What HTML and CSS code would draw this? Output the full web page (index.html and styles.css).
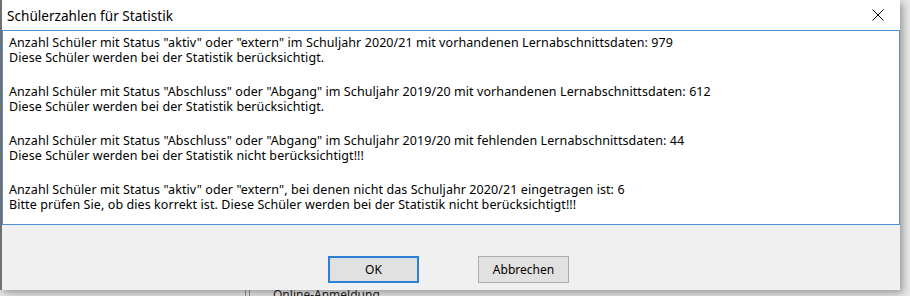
FILE: index.html
```html
<!DOCTYPE html>
<html lang="de">
<head>
    <meta charset="UTF-8">
    <title>Schülerzahlen für Statistik</title>
    <link rel="stylesheet" href="styles.css">
</head>
<body>

    <div class="dialog">
        <div class="titlebar">
            <span class="title">Schülerzahlen für Statistik</span>
            <button class="close-btn" title="Schließen">
                <svg width="12" height="12" viewBox="0 0 12 12">
                    <path d="M0.5 0.5 L11.5 11.5 M11.5 0.5 L0.5 11.5" stroke="#000" stroke-width="1" fill="none"/>
                </svg>
            </button>
        </div>

        <div class="memo">
            <p>Anzahl Schüler mit Status "aktiv" oder "extern" im Schuljahr 2020/21 mit vorhandenen Lernabschnittsdaten: 979<br>
            Diese Schüler werden bei der Statistik berücksichtigt.</p>
            <p>Anzahl Schüler mit Status "Abschluss" oder "Abgang" im Schuljahr 2019/20 mit vorhandenen Lernabschnittsdaten: 612<br>
            Diese Schüler werden bei der Statistik berücksichtigt.</p>
            <p>Anzahl Schüler mit Status "Abschluss" oder "Abgang" im Schuljahr 2019/20 mit fehlenden Lernabschnittsdaten: 44<br>
            Diese Schüler werden bei der Statistik nicht berücksichtigt!!!</p>
            <p>Anzahl Schüler mit Status "aktiv" oder "extern", bei denen nicht das Schuljahr 2020/21 eingetragen ist: 6<br>
            Bitte prüfen Sie, ob dies korrekt ist. Diese Schüler werden bei der Statistik nicht berücksichtigt!!!</p>
        </div>

        <div class="buttons">
            <button class="btn btn-default">OK</button>
            <button class="btn">Abbrechen</button>
        </div>
    </div>

    <div class="app">
        <span class="splitter"></span>
        <span class="app-item">Online-Anmeldung</span>
    </div>

</body>
</html>
```

FILE: styles.css
```css
* { margin: 0; padding: 0; box-sizing: border-box; }
body {
    width: 910px; height: 296px; overflow: hidden;
    background: #e9e9e9; font-family: "Noto Sans", "DejaVu Sans", sans-serif; color: #000;
}
.dialog {
    width: 900px; height: 290px; background: #f0f0f0;
    border-left: 2px solid #707070;
    box-shadow: 3px 3px 8px rgba(0, 0, 0, 0.35);
    display: flex; flex-direction: column;
    position: relative; z-index: 1;
}
.titlebar {
    height: 30px; background: white;
    display: flex; align-items: center; justify-content: space-between;
    padding-left: 5px;
}
.title { font-size: 13.6px; color: #000; }
.close-btn {
    width: 46px; height: 30px; border: none; background: transparent;
    display: flex; align-items: center; justify-content: center;
    padding-left: 2px;
}
.memo {
    height: 195px; background: white;
    border: 1px solid #4f92d4;
    padding: 4px 6px;
    font-size: 12.5px; line-height: 15px; letter-spacing: 0.08px;
}
.memo p { margin-bottom: 19px; }
.buttons {
    flex: 1; display: flex; gap: 59px;
    padding: 31px 0 0 326px;
}
.btn {
    width: 91px; height: 27px;
    background: #e1e1e1; border: 1px solid #adadad;
    font-family: inherit; font-size: 12px; color: #000;
}
.btn-default { border: 2px solid #2b7fd4; }
.app {
    height: 6px; display: flex; align-items: flex-start; overflow: hidden;
    padding-left: 245px;
}
.splitter {
    width: 5px; height: 6px; margin-right: 23px;
    border-left: 1px solid #909090; border-right: 1px solid #909090;
}
.app-item { font-size: 12px; line-height: 12px; margin-top: -1px; color: #222; }
```
